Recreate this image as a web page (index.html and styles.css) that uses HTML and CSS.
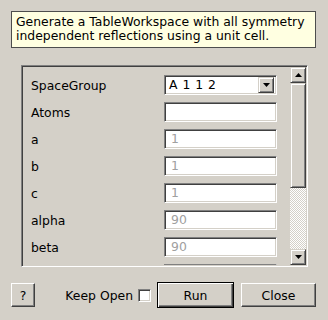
FILE: index.html
```html
<!DOCTYPE html>
<html>
<head>
<meta charset="utf-8">
<link rel="stylesheet" href="styles.css">
</head>
<body>
<div class="tooltip">Generate a TableWorkspace with all symmetry independent reflections using a unit cell.</div>
<div class="scrollarea">
  <div class="content">
    <div class="row"><span class="label">SpaceGroup</span><div class="combo"><span class="combo-text">A 1 1 2</span><span class="combo-btn"><svg width="7" height="4" viewBox="0 0 7 4"><path d="M0 0h7L3.5 4z" fill="#000"/></svg></span></div></div>
    <div class="row"><span class="label">Atoms</span><div class="input"></div></div>
    <div class="row"><span class="label">a</span><div class="input ph">1</div></div>
    <div class="row"><span class="label">b</span><div class="input ph">1</div></div>
    <div class="row"><span class="label">c</span><div class="input ph">1</div></div>
    <div class="row"><span class="label">alpha</span><div class="input ph">90</div></div>
    <div class="row"><span class="label">beta</span><div class="input ph">90</div></div>
    <div class="row"><span class="label"></span><div class="input"></div></div>
  </div>
  <div class="scrollbar">
    <div class="sb-btn"><svg width="7" height="4" viewBox="0 0 7 4"><path d="M3.5 0L7 4H0z" fill="#000"/></svg></div>
    <div class="sb-thumb"></div>
    <div class="sb-trough"></div>
    <div class="sb-btn"><svg width="7" height="4" viewBox="0 0 7 4"><path d="M0 0h7L3.5 4z" fill="#000"/></svg></div>
  </div>
</div>
<div class="footer">
  <div class="btn help">?</div>
  <div class="spacer"></div>
  <span class="keep">Keep Open</span>
  <span class="checkbox"></span>
  <div class="btn run">Run</div>
  <div class="btn close">Close</div>
</div>
</body>
</html>
```
FILE: styles.css
```css
html, body {
  margin: 0;
  padding: 0;
  background: #d4d0c8;
  font-family: "DejaVu Sans", sans-serif;
  font-size: 12.4px;
  color: #000;
}
body {
  width: 328px;
  height: 320px;
  overflow: hidden;
}
.tooltip {
  box-sizing: border-box;
  margin: 11px 0 0 11px;
  width: 305px;
  height: 37px;
  padding: 3px 3px 0 4px;
  background: #ffffe1;
  border: 1px solid #4d4d4d;
  line-height: 14px;
}
.scrollarea {
  box-sizing: border-box;
  margin: 17px 0 0 21px;
  width: 287px;
  height: 202px;
  border: 1px solid;
  border-color: #808080 #fff #fff #808080;
  box-shadow: inset 1px 1px #404040, inset -1px -1px #d4d0c8;
  padding: 1px;
  display: flex;
}
.content {
  flex: 1;
  overflow: hidden;
  padding: 8px 0 0 8px;
  display: flex;
  flex-direction: column;
  gap: 7px;
}
.row {
  display: flex;
  align-items: center;
  height: 20px;
  flex-shrink: 0;
}
.label {
  width: 133px;
}
.input, .combo {
  box-sizing: border-box;
  width: 113px;
  height: 20px;
  border: 1px solid;
  border-color: #808080 #fff #fff #808080;
  box-shadow: inset 1px 1px #404040, inset -1px -1px #d4d0c8;
  background: #fff;
  padding: 0 0 0 6px;
  line-height: 18px;
}
.ph {
  color: #a0a0a0;
}
.combo {
  display: flex;
  align-items: center;
  padding: 2px 2px 2px 4px;
  letter-spacing: 0.5px;
}
.combo-text {
  flex: 1;
}
.combo-btn {
  box-sizing: border-box;
  width: 16px;
  height: 16px;
  background: #d4d0c8;
  border: 1px solid;
  border-color: #d4d0c8 #404040 #404040 #d4d0c8;
  box-shadow: inset 1px 1px #fff, inset -1px -1px #808080;
  display: flex;
  align-items: center;
  justify-content: center;
}
.scrollbar {
  width: 16px;
  display: flex;
  flex-direction: column;
}
.sb-btn, .sb-thumb {
  box-sizing: border-box;
  background: #d4d0c8;
  border: 1px solid;
  border-color: #d4d0c8 #404040 #404040 #d4d0c8;
  box-shadow: inset 1px 1px #fff, inset -1px -1px #808080;
}
.sb-btn {
  height: 16px;
  display: flex;
  align-items: center;
  justify-content: center;
}
.sb-thumb {
  height: 105px;
}
.sb-trough {
  flex: 1;
  background: repeating-conic-gradient(#fff 0 25%, #d4d0c8 0 50%);
  background-size: 2px 2px;
}
.footer {
  display: flex;
  align-items: center;
  margin: 16px 12px 0 11px;
  height: 24px;
}
.btn {
  box-sizing: border-box;
  height: 24px;
  background: #d4d0c8;
  border: 1px solid;
  border-color: #fff #404040 #404040 #fff;
  box-shadow: inset -1px -1px #808080;
  display: flex;
  align-items: center;
  justify-content: center;
}
.help {
  width: 24px;
}
.spacer {
  flex: 1;
}
.keep {
  margin-right: 5px;
}
.checkbox {
  box-sizing: border-box;
  width: 13px;
  height: 13px;
  background: #fff;
  border: 1px solid;
  border-color: #808080 #fff #fff #808080;
  box-shadow: inset 1px 1px #404040, inset -1px -1px #d4d0c8;
  margin-right: 6px;
}
.run {
  width: 77px;
  height: 26px;
  border: 1px solid #000;
  box-shadow: inset 1px 1px #fff, inset -1px -1px #404040, inset -2px -2px #808080;
  margin-right: 7px;
}
.close {
  width: 75px;
}
```
